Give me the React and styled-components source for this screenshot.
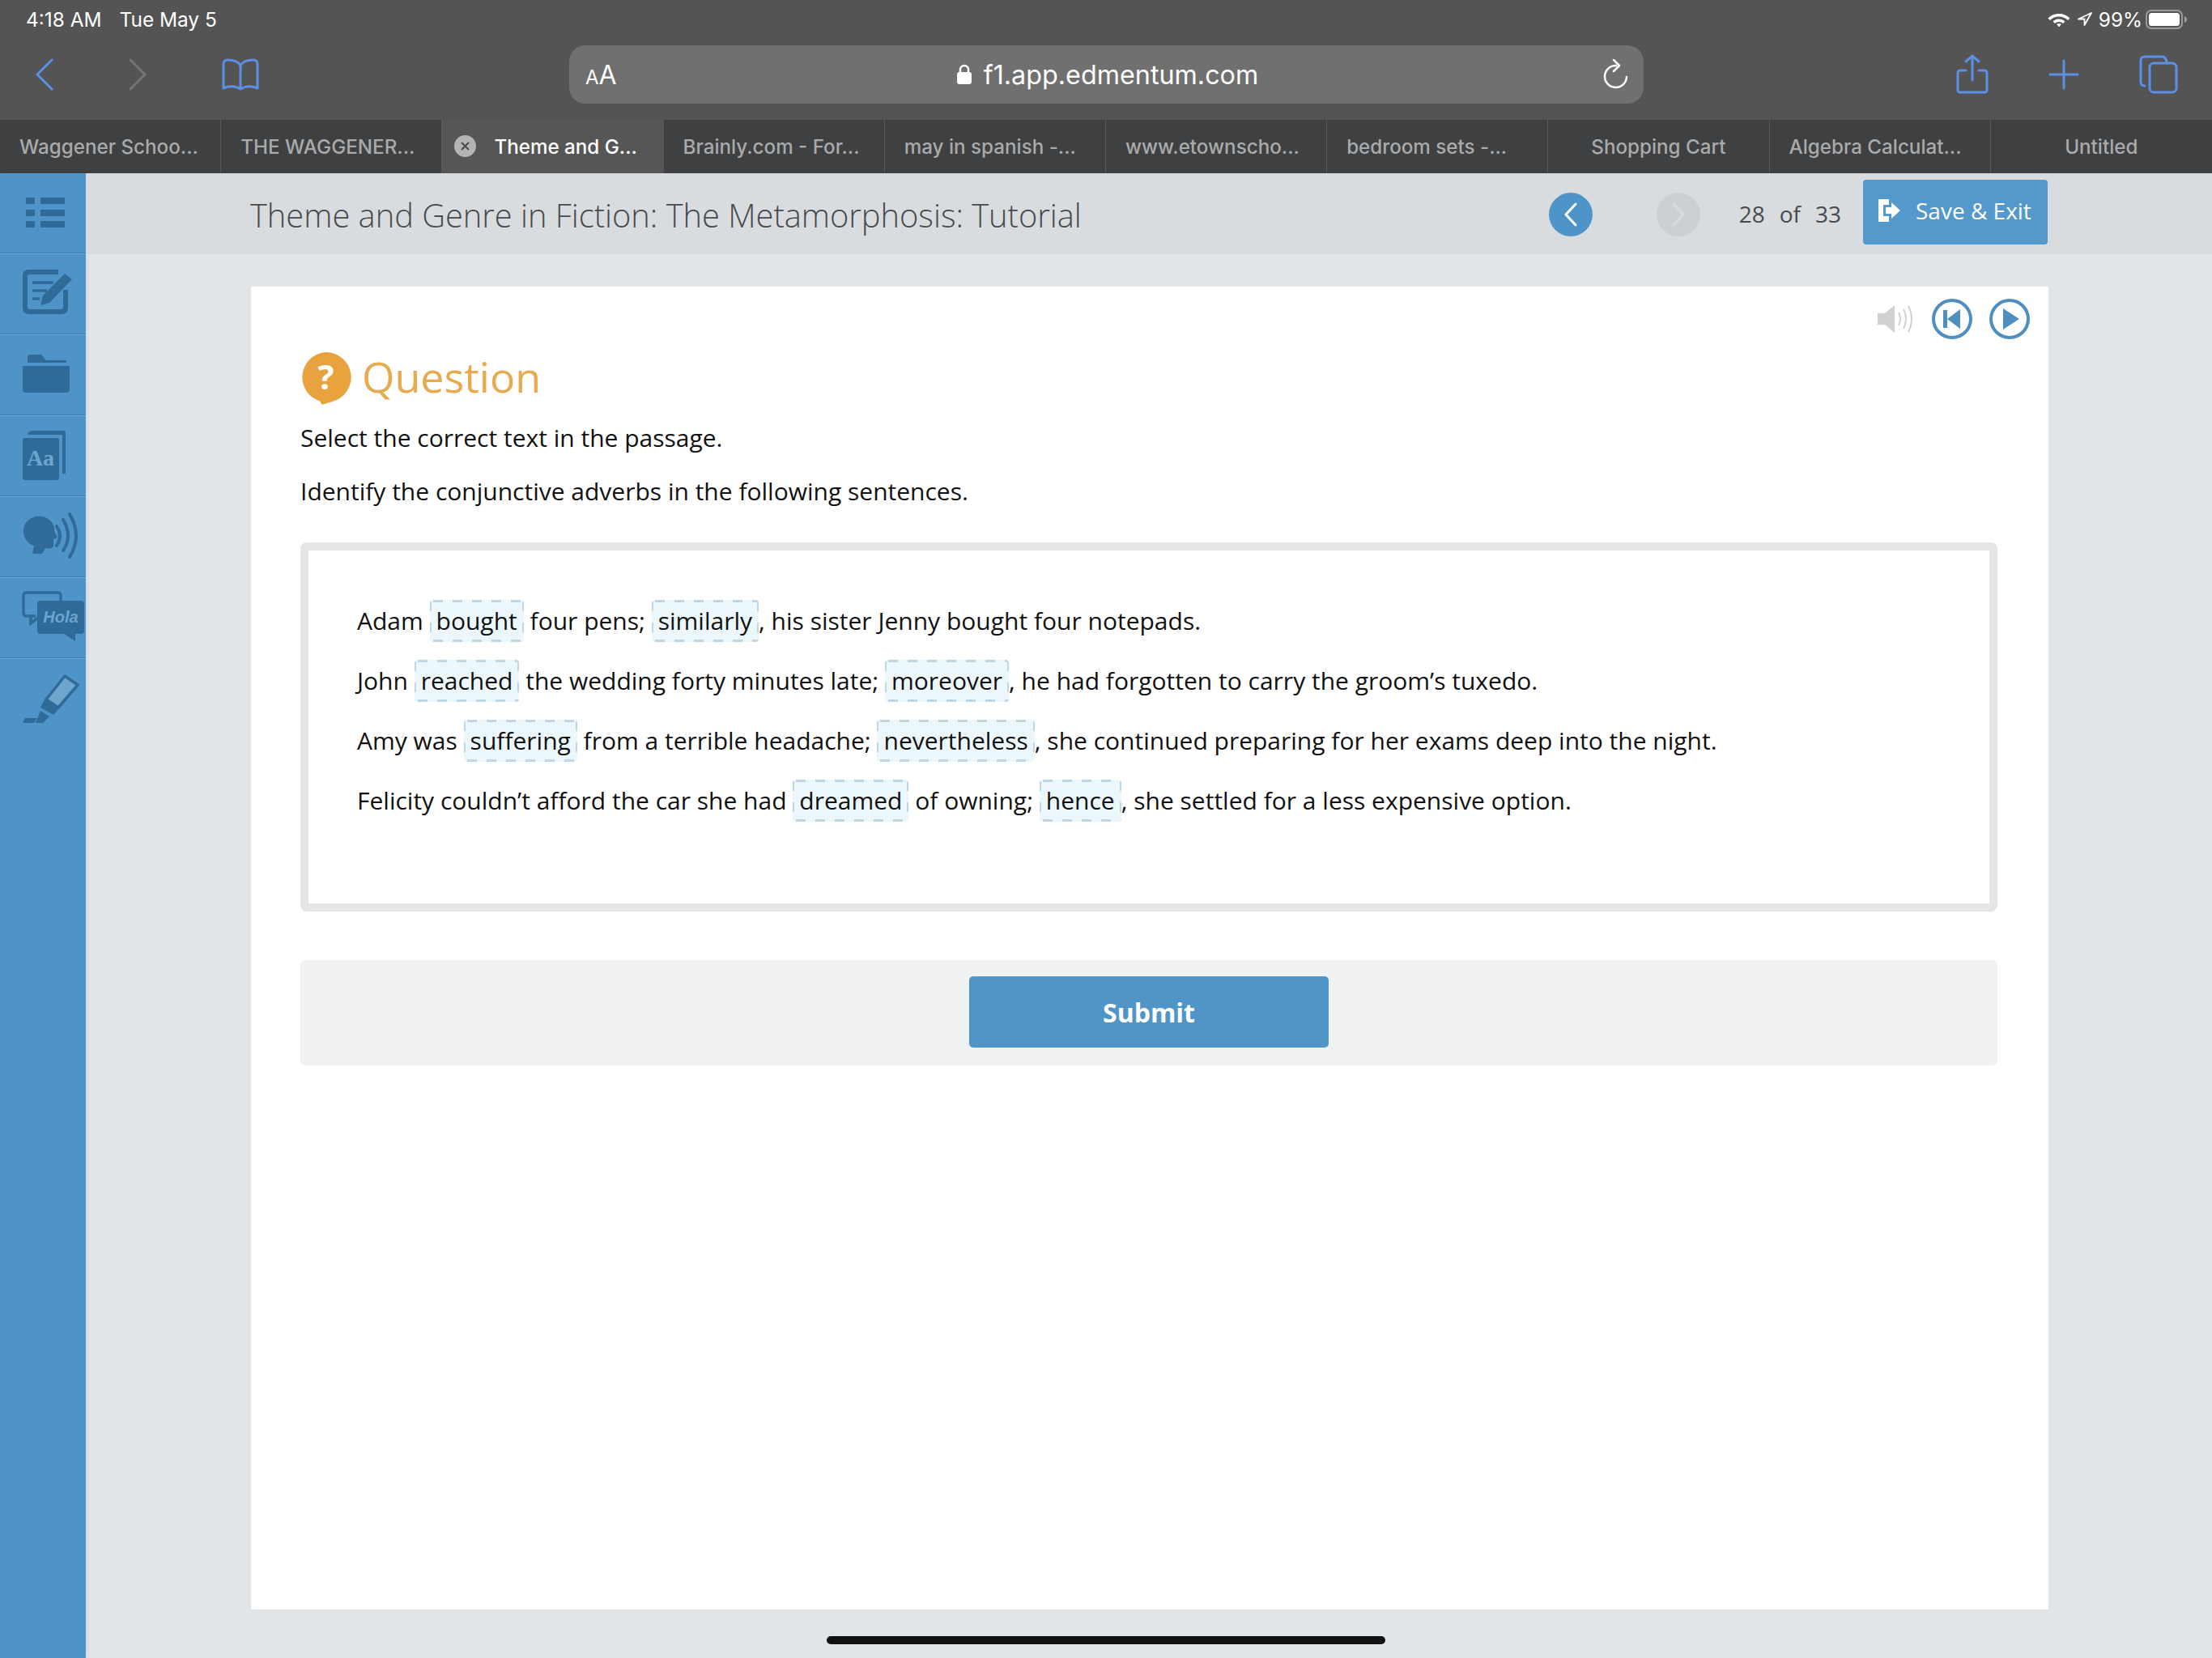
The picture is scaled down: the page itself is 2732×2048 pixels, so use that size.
import React from "react";
import styled, { createGlobalStyle } from "styled-components";

const GlobalStyle = createGlobalStyle`
  html, body {
    margin: 0;
    padding: 0;
    background: #e2e5e7;
  }
  * {
    box-sizing: border-box;
  }
`;

const Screen = styled.div`
  position: relative;
  width: 2732px;
  height: 2048px;
  overflow: hidden;
  display: flex;
  flex-direction: column;
  font-family: "Open Sans", sans-serif;
  background: #e2e5e7;
`;

/* ---------- ipad status bar + safari chrome ---------- */

const StatusBar = styled.div`
  height: 48px;
  padding: 0 30px 0 32px;
  display: flex;
  align-items: center;
  justify-content: space-between;
  background: #535453;
  color: #fff;
  font-family: Inter, sans-serif;
  font-size: 24.4px;
`;

const StatusGroup = styled.div`
  display: flex;
  align-items: center;
  gap: ${(p) => p.$gap || 21}px;
`;

const StatusIcons = styled.div`
  display: flex;
  align-items: center;
  gap: 7px;
  margin-right: 3px;
`;

const Toolbar = styled.div`
  height: 100px;
  padding-bottom: 12px;
  display: flex;
  align-items: center;
  background: #535453;
`;

const ToolbarLeft = styled.div`
  flex: none;
  width: 703px;
  padding-left: 44px;
  display: flex;
  align-items: center;
  gap: 93px;
`;

const ToolbarRight = styled.div`
  flex: 1;
  padding: 0 44px 0 386px;
  display: flex;
  align-items: center;
  gap: 74px;
`;

const UrlBar = styled.div`
  flex: none;
  width: 1327px;
  height: 72px;
  padding: 0 18px 0 20px;
  display: flex;
  align-items: center;
  justify-content: space-between;
  border-radius: 20px;
  background: #6f706f;
  color: #fff;
  font-family: Inter, sans-serif;
`;

const TextSizeLabel = styled.div`
  width: 34px;
  white-space: nowrap;
  font-size: 32px;
  span {
    font-size: 24px;
  }
`;

const UrlText = styled.div`
  display: flex;
  align-items: center;
  gap: 14px;
  font-size: 32.3px;
  font-weight: 400;
`;

const TabStrip = styled.div`
  height: 66px;
  display: flex;
  background: #3f4042;
  font-family: Inter, sans-serif;
  font-size: 24.2px;
  font-weight: 500;
`;

const Tab = styled.div`
  flex: none;
  width: 10%;
  position: relative;
  display: flex;
  align-items: center;
  justify-content: ${(p) => (p.$center ? "center" : "flex-start")};
  padding-left: ${(p) => (p.$active ? 64 : p.$center ? 0 : 24)}px;
  border-right: 1px solid #58595a;
  background: ${(p) => (p.$active ? "#565656" : "transparent")};
  color: ${(p) => (p.$active ? "#fff" : "#a9aaab")};
  &:last-child {
    border-right: none;
  }
`;

const TabClose = styled.div`
  position: absolute;
  left: 15px;
  top: 19px;
  width: 27px;
  height: 27px;
  border-radius: 50%;
  background: #b4b4b4;
  color: #4a4a4a;
  display: flex;
  align-items: center;
  justify-content: center;
`;

/* ---------- page ---------- */

const Body = styled.div`
  flex: 1;
  display: flex;
  min-height: 0;
`;

const Sidebar = styled.div`
  flex: none;
  width: 106px;
  background: #4f94c8;
  box-shadow: 2px 0 4px rgba(0, 0, 0, 0.05);
`;

const SideItem = styled.div`
  height: 100px;
  border-bottom: 1px solid #6aa8d6;
  box-shadow: inset 0 -1px 0 #3c7fb2;
  &:last-child {
    border-bottom: none;
    box-shadow: none;
  }
  svg {
    display: block;
  }
`;

const Main = styled.div`
  flex: 1;
  display: flex;
  flex-direction: column;
  min-width: 0;
`;

const SubHeader = styled.div`
  height: 100px;
  padding: 0 203px;
  display: flex;
  align-items: center;
  background: #d9dcde;
`;

const LessonTitle = styled.div`
  flex: 1;
  padding-top: 2px;
  font-size: 39.8px;
  font-weight: 300;
  color: #474b4e;
`;

const NavCircle = styled.div`
  flex: none;
  width: 54px;
  height: 54px;
  margin-top: 2px;
  margin-right: ${(p) => p.$gap}px;
  border-radius: 50%;
  background: ${(p) => (p.$disabled ? "#cdd0d3" : "#4f94c8")};
  display: flex;
  align-items: center;
  justify-content: center;
`;

const PageCount = styled.div`
  display: flex;
  gap: 18px;
  margin-right: 27px;
  font-size: 28px;
  color: #474b4e;
`;

const SaveButton = styled.div`
  flex: none;
  width: 228px;
  height: 80px;
  margin-bottom: 4px;
  padding: 0 0 4px 19px;
  display: flex;
  align-items: center;
  gap: 19px;
  border-radius: 4px;
  background: #5499cb;
  color: #fff;
  font-size: 28px;
`;

const Card = styled.div`
  width: 2220px;
  height: 1634px;
  margin: 40px 0 0 204px;
  padding: 0 63px 0 61px;
  display: flex;
  flex-direction: column;
  background: #fff;
`;

const AudioBar = styled.div`
  height: 80px;
  margin-right: -40px;
  display: flex;
  align-items: center;
  justify-content: flex-end;
  gap: 21px;
`;

const Heading = styled.div`
  height: 66px;
  display: flex;
  align-items: flex-start;
  gap: 13px;
  font-size: 52px;
  line-height: 62px;
  color: #e8aa4f;
`;

const Prompt = styled.p`
  margin: ${(p) => p.$top}px 0 0;
  font-size: 30px;
  line-height: 40px;
  color: #111;
`;

const Passage = styled.div`
  height: 456px;
  margin-top: 43px;
  padding: 50px 60px 0;
  border: 10px solid #e4e6e7;
  border-radius: 8px;
  font-size: 30px;
  color: #111;
`;

const Sentence = styled.div`
  height: 74px;
  line-height: 74px;
  white-space: pre;
`;

const Token = styled.span`
  display: inline-block;
  height: 52px;
  padding: 0 8px;
  line-height: 52px;
  border-radius: 4px;
  background-color: #ecf7fc;
  background-image: linear-gradient(90deg, #bdd7e6 50%, transparent 50%),
    linear-gradient(90deg, #bdd7e6 50%, transparent 50%),
    linear-gradient(180deg, #bdd7e6 46%, transparent 46%),
    linear-gradient(180deg, #bdd7e6 46%, transparent 46%);
  background-size: 24px 3px, 24px 3px, 2px 26px, 2px 26px;
  background-position: 4px 0, 4px 100%, 0 2px, 100% 2px;
  background-repeat: repeat-x, repeat-x, repeat-y, repeat-y;
`;

const SubmitBar = styled.div`
  height: 130px;
  margin-top: 60px;
  display: flex;
  align-items: center;
  justify-content: center;
  border-radius: 6px;
  background: #eff1f3;
`;

const SubmitButton = styled.div`
  width: 444px;
  height: 88px;
  margin-bottom: 2px;
  display: flex;
  align-items: center;
  justify-content: center;
  border-radius: 5px;
  background: #5095c8;
  color: #fff;
  font-size: 32px;
  font-weight: 700;
`;

const HomeIndicator = styled.div`
  position: absolute;
  left: 1021px;
  bottom: 17px;
  width: 690px;
  height: 10px;
  border-radius: 5px;
  background: #111;
`;

/* ---------- drawings ---------- */

const SAFARI_BLUE = "#5c8fe6";
const SIDE_DARK = "#2f6a99";
const SIDE_LIGHT = "#6ea5cf";

const Line = ({ w, h, children, color = SAFARI_BLUE, sw = 3 }) => (
  <svg width={w} height={h} viewBox={`0 0 ${w} ${h}`} fill="none" stroke={color} strokeWidth={sw} strokeLinecap="round" strokeLinejoin="round">
    {children}
  </svg>
);

const SideIcon = ({ children }) => (
  <svg width="106" height="98" viewBox="0 0 106 98" fill={SIDE_DARK}>
    {children}
  </svg>
);

const sideIcons = [
  <SideIcon key="list">
    <rect x="32" y="30" width="11" height="8" />
    <rect x="50" y="30" width="30" height="8" />
    <rect x="32" y="45" width="11" height="8" />
    <rect x="50" y="45" width="30" height="8" />
    <rect x="32" y="59" width="11" height="8" />
    <rect x="50" y="59" width="30" height="8" />
  </SideIcon>,
  <SideIcon key="note">
    <path d="M72 22H36q-5 0-5 5v39q0 5 5 5h40q5 0 5-5V44" fill="none" stroke={SIDE_DARK} strokeWidth="6" />
    <path d="M40 35h26M40 45h18M40 55h9" stroke={SIDE_DARK} strokeWidth="3.5" />
    <path d="M53 51 80 24l9 7-28 29-11 3z" />
  </SideIcon>,
  <SideIcon key="folder">
    <path d="M34 34v-6q0-4 4-4h13l6 7h25v3z" />
    <path d="M28 38h58v29q0 4-4 4H32q-4 0-4-4z" />
  </SideIcon>,
  <SideIcon key="book">
    <path d="M34 22q2-4 6-4h38q3 0 3 3v50h-4V23H36z" />
    <rect x="28" y="27" width="45" height="52" rx="3" />
    <text x="50" y="61" textAnchor="middle" fontFamily="Liberation Serif, serif" fontWeight="700" fontSize="28" fill={SIDE_LIGHT}>
      Aa
    </text>
  </SideIcon>,
  <SideIcon key="speak">
    <path d="M29 44c-1-14 11-22 23-20 10 2 16 10 15 18l4 8-5 2v8c-1 4-6 4-10 3l-4 7H40l2-10c-7-2-12-8-13-16z" />
    <path d="M70 36q8 12 0 24M78 28q12 20 0 38M86 21q16 27 0 53" fill="none" stroke={SIDE_DARK} strokeWidth="4" strokeLinecap="round" />
  </SideIcon>,
  <SideIcon key="hola">
    <path d="M44 47H33q-4 0-4-4V22q0-4 4-4h38q4 0 4 4v6M38 47v9l10-8" fill="none" stroke={SIDE_DARK} strokeWidth="3.5" />
    <path d="M50 28h50q4 0 4 4v33q0 4-4 4h-7v9l-14-9H50q-4 0-4-4V32q0-4 4-4z" />
    <text x="75" y="55" textAnchor="middle" fontFamily="Liberation Sans, sans-serif" fontStyle="italic" fontWeight="700" fontSize="20" fill={SIDE_LIGHT}>
      Hola
    </text>
  </SideIcon>,
  <SideIcon key="marker">
    <path d="M80 21 96 32 72 60 57 50z" fill={SIDE_LIGHT} stroke={SIDE_DARK} strokeWidth="3.5" strokeLinejoin="round" />
    <path d="M56 48 74 60 66 69 50 60z" />
    <path d="M50 64 61 71 53 79H44z" />
    <path d="M28 79 31 73H46L42 79z" />
  </SideIcon>,
];

const tabs = [
  { label: "Waggener Schoo..." },
  { label: "THE WAGGENER..." },
  { label: "Theme and G...", active: true },
  { label: "Brainly.com - For..." },
  { label: "may in spanish -..." },
  { label: "www.etownscho..." },
  { label: "bedroom sets -..." },
  { label: "Shopping Cart", center: true },
  { label: "Algebra Calculat..." },
  { label: "Untitled", center: true },
];

const sentences = [
  ["Adam ", { t: "bought" }, " four pens; ", { t: "similarly" }, ", his sister Jenny bought four notepads."],
  ["John ", { t: "reached" }, " the wedding forty minutes late; ", { t: "moreover" }, ", he had forgotten to carry the groom’s tuxedo."],
  ["Amy was ", { t: "suffering" }, " from a terrible headache; ", { t: "nevertheless" }, ", she continued preparing for her exams deep into the night."],
  ["Felicity couldn’t afford the car she had ", { t: "dreamed" }, " of owning; ", { t: "hence" }, ", she settled for a less expensive option."],
];

export default function App() {
  return (
    <Screen>
      <GlobalStyle />
      <StatusBar>
        <StatusGroup $gap={22}>
          <span>4:18 AM</span>
          <span>Tue May 5</span>
        </StatusGroup>
        <StatusGroup $gap={4}>
          <StatusIcons>
            <svg width="30" height="20" viewBox="0 0 30 20" fill="#fff">
              <path d="M15 3C9.500 3 5 5 1.500 8.500L4 11C7 8 11 6.500 15 6.500S23 8 26 11l2.500-2.500C25 5 20.500 3 15 3z" />
              <path d="M15 9.500c-3 0-5.500 1-7.500 3L10 15c1.500-1.300 3-2 5-2s3.500.700 5 2l2.500-2.500c-2-2-4.500-3-7.500-3z" />
              <path d="M15 15c-1.200 0-2 .4-2.800 1l2.800 3.500 2.800-3.500c-.8-.6-1.600-1-2.800-1z" />
            </svg>
            <svg width="20" height="18" viewBox="0 0 20 18" fill="none" stroke="#fff" strokeWidth="1.800" strokeLinejoin="round">
              <path d="M18 1 2 8.500h7.500V16z" />
            </svg>
          </StatusIcons>
          <span>99%</span>
          <svg width="52" height="24" viewBox="0 0 52 24">
            <rect x="1" y="1" width="44" height="22" rx="6" fill="none" stroke="#9b9b9b" strokeWidth="2" />
            <rect x="4" y="4" width="38" height="16" rx="3.500" fill="#fff" />
            <path d="M48 8q3 1 3 4t-3 4z" fill="#9b9b9b" />
          </svg>
        </StatusGroup>
      </StatusBar>

      <Toolbar>
        <ToolbarLeft>
          <Line w={22} h={40}>
            <path d="M20 2 2 20l18 18" />
          </Line>
          <Line w={22} h={40} color="#757575">
            <path d="M2 2l18 18L2 38" />
          </Line>
          <Line w={46} h={40}>
            <path d="M23 9C20 3 14 2 7 2 4 2 2 4 2 7v30c7-3 15-3 21 1 6-4 14-4 21-1V7c0-3-2-5-5-5-7 0-13 1-16 7zM23 9v29" />
          </Line>
        </ToolbarLeft>
        <UrlBar>
          <TextSizeLabel>
            <span>A</span>A
          </TextSizeLabel>
          <UrlText>
            <svg width="20" height="26" viewBox="0 0 20 26">
              <path d="M5 11V7a5 5 0 0 1 10 0v4" fill="none" stroke="#fff" strokeWidth="2.500" />
              <rect x="1" y="10" width="18" height="15" rx="3" fill="#fff" />
            </svg>
            <span>f1.app.edmentum.com</span>
          </UrlText>
          <Line w={34} h={38} color="#fff" sw={2.5}>
            <path d="M18 8a13.500 13.500 0 1 0 13 14" />
            <path d="M15 1l7 7-7 7" />
          </Line>
        </UrlBar>
        <ToolbarRight>
          <Line w={40} h={50}>
            <path d="M12 20H5q-3 0-3 3v21q0 3 3 3h30q3 0 3-3V23q0-3-3-3h-7M20 32V2M12 9l8-7 8 7" />
          </Line>
          <Line w={38} h={38}>
            <path d="M19 2v34M2 19h34" />
          </Line>
          <Line w={48} h={48}>
            <path d="M7 38q-5 0-5-5V7q0-5 5-5h21q6 0 6 8" />
            <rect x="13" y="10" width="33" height="36" rx="5" />
          </Line>
        </ToolbarRight>
      </Toolbar>

      <TabStrip>
        {tabs.map((tab) => (
          <Tab key={tab.label} $active={tab.active} $center={tab.center}>
            {tab.active && (
              <TabClose>
                <svg width="11" height="11" viewBox="0 0 11 11" stroke="currentColor" strokeWidth="2">
                  <path d="M1 1l9 9M10 1l-9 9" />
                </svg>
              </TabClose>
            )}
            {tab.label}
          </Tab>
        ))}
      </TabStrip>

      <Body>
        <Sidebar>
          {sideIcons.map((icon) => (
            <SideItem key={icon.key}>{icon}</SideItem>
          ))}
        </Sidebar>
        <Main>
          <SubHeader>
            <LessonTitle>Theme and Genre in Fiction: The Metamorphosis: Tutorial</LessonTitle>
            <NavCircle $gap={79}>
              <Line w={20} h={32} color="#fff" sw={3}>
                <path d="M16 3 4 16l12 13" />
              </Line>
            </NavCircle>
            <NavCircle $disabled $gap={48}>
              <Line w={20} h={32} color="#d9dcde" sw={3}>
                <path d="M4 3l12 13L4 29" />
              </Line>
            </NavCircle>
            <PageCount>
              <span>28</span>
              <span>of</span>
              <span>33</span>
            </PageCount>
            <SaveButton>
              <svg width="27" height="28" viewBox="0 0 27 28" fill="#fff">
                <path d="M0 0h13v7H6v14h7v7H0z" />
                <path d="M9 10h7V4l11 10-11 10v-6H9z" />
              </svg>
              <span>Save &amp; Exit</span>
            </SaveButton>
          </SubHeader>

          <Card>
            <AudioBar>
              <svg width="46" height="36" viewBox="0 0 46 36" fill="none">
                <path d="M0 11h9L21 1v34L9 25H0z" fill="#cfd1d2" />
                <path d="M26 10q4 8 0 16M32 6q6 12 0 24M38 2q8 16 0 32" stroke="#cfd1d2" strokeWidth="2" />
              </svg>
              <svg width="50" height="50" viewBox="0 0 50 50">
                <circle cx="25" cy="25" r="23" fill="#fff" stroke="#4f8fbf" strokeWidth="4" />
                <rect x="14" y="14" width="5" height="22" fill="#4f8fbf" />
                <path d="M35 13v24L19 25z" fill="#4f8fbf" />
              </svg>
              <svg width="50" height="50" viewBox="0 0 50 50">
                <circle cx="25" cy="25" r="23" fill="#fff" stroke="#4f8fbf" strokeWidth="4" />
                <path d="M17 12v26l20-13z" fill="#4f8fbf" />
              </svg>
            </AudioBar>
            <Heading>
              <svg width="63" height="66" viewBox="0 0 63 66">
                <path d="M31.500 1a31 31 0 0 1 8 61L27 66l-3-4.500A31 31 0 0 1 31.500 1z" fill="#e8a33e" />
                <text x="31.500" y="47" textAnchor="middle" fontFamily="Open Sans, sans-serif" fontWeight="700" fontSize="42" fill="#fff">
                  ?
                </text>
              </svg>
              <span>Question</span>
            </Heading>
            <Prompt $top={21}>Select the correct text in the passage.</Prompt>
            <Prompt $top={26}>Identify the conjunctive adverbs in the following sentences.</Prompt>
            <Passage>
              {sentences.map((parts, i) => (
                <Sentence key={i}>
                  {parts.map((part, j) =>
                    typeof part === "string" ? part : <Token key={j}>{part.t}</Token>
                  )}
                </Sentence>
              ))}
            </Passage>
            <SubmitBar>
              <SubmitButton>Submit</SubmitButton>
            </SubmitBar>
          </Card>
        </Main>
      </Body>
      <HomeIndicator />
    </Screen>
  );
}
